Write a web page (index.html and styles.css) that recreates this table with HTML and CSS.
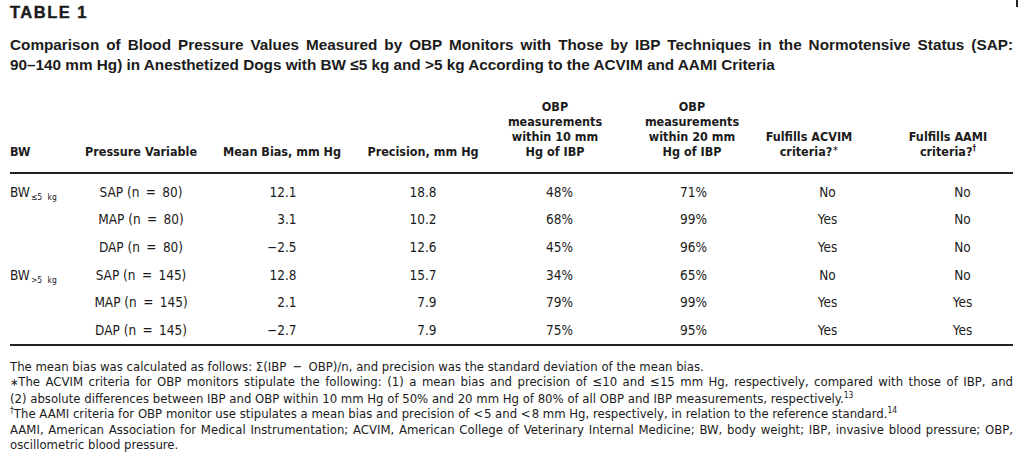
FILE: index.html
```html
<!DOCTYPE html>
<html lang="en">
<head>
<meta charset="utf-8">
<title>Table 1</title>
<link rel="stylesheet" href="styles.css">
</head>
<body>
<div class="page">
  <span class="edge-mark"></span>
  <h1 class="label">TABLE 1</h1>
  <h2 class="caption">
    <span class="jline">Comparison of Blood Pressure Values Measured by OBP Monitors with Those by IBP Techniques in the Normotensive Status (SAP:</span>
    <span class="lline">90–140 mm Hg) in Anesthetized Dogs with BW ≤5 kg and &gt;5 kg According to the ACVIM and AAMI Criteria</span>
  </h2>

  <div class="table">
    <div class="row head">
      <div class="cell c-bw"><span>BW</span></div>
      <div class="cell"><span>Pressure Variable</span></div>
      <div class="cell"><span>Mean Bias, mm Hg</span></div>
      <div class="cell"><span>Precision, mm Hg</span></div>
      <div class="cell"><span>OBP<br>measurements<br>within 10 mm<br>Hg of IBP</span></div>
      <div class="cell"><span>OBP<br>measurements<br>within 20 mm<br>Hg of IBP</span></div>
      <div class="cell"><span>Fulfills ACVIM<br>criteria?<sup class="ast">∗</sup></span></div>
      <div class="cell"><span>Fulfills AAMI<br>criteria?<sup>†</sup></span></div>
    </div>

    <div class="body">
      <div class="row">
        <div class="cell c-bw"><span>BW<sub>≤5 kg</sub></span></div>
        <div class="cell"><span>SAP (n <span class="eq">=</span> 80)</span></div>
        <div class="cell num mb"><span>12.1</span></div>
        <div class="cell num pr"><span>18.8</span></div>
        <div class="cell o10"><span>48%</span></div>
        <div class="cell o20"><span>71%</span></div>
        <div class="cell acv"><span>No</span></div>
        <div class="cell aam"><span>No</span></div>
      </div>
      <div class="row">
        <div class="cell c-bw"></div>
        <div class="cell"><span>MAP (n <span class="eq">=</span> 80)</span></div>
        <div class="cell num mb"><span>3.1</span></div>
        <div class="cell num pr"><span>10.2</span></div>
        <div class="cell o10"><span>68%</span></div>
        <div class="cell o20"><span>99%</span></div>
        <div class="cell acv"><span>Yes</span></div>
        <div class="cell aam"><span>No</span></div>
      </div>
      <div class="row">
        <div class="cell c-bw"></div>
        <div class="cell"><span>DAP (n <span class="eq">=</span> 80)</span></div>
        <div class="cell num mb"><span>−2.5</span></div>
        <div class="cell num pr"><span>12.6</span></div>
        <div class="cell o10"><span>45%</span></div>
        <div class="cell o20"><span>96%</span></div>
        <div class="cell acv"><span>Yes</span></div>
        <div class="cell aam"><span>No</span></div>
      </div>
      <div class="row">
        <div class="cell c-bw"><span>BW<sub>&gt;5 kg</sub></span></div>
        <div class="cell"><span>SAP (n <span class="eq">=</span> 145)</span></div>
        <div class="cell num mb"><span>12.8</span></div>
        <div class="cell num pr"><span>15.7</span></div>
        <div class="cell o10"><span>34%</span></div>
        <div class="cell o20"><span>65%</span></div>
        <div class="cell acv"><span>No</span></div>
        <div class="cell aam"><span>No</span></div>
      </div>
      <div class="row">
        <div class="cell c-bw"></div>
        <div class="cell"><span>MAP (n <span class="eq">=</span> 145)</span></div>
        <div class="cell num mb"><span>2.1</span></div>
        <div class="cell num pr"><span>7.9</span></div>
        <div class="cell o10"><span>79%</span></div>
        <div class="cell o20"><span>99%</span></div>
        <div class="cell acv"><span>Yes</span></div>
        <div class="cell aam"><span>Yes</span></div>
      </div>
      <div class="row">
        <div class="cell c-bw"></div>
        <div class="cell"><span>DAP (n <span class="eq">=</span> 145)</span></div>
        <div class="cell num mb"><span>−2.7</span></div>
        <div class="cell num pr"><span>7.9</span></div>
        <div class="cell o10"><span>75%</span></div>
        <div class="cell o20"><span>95%</span></div>
        <div class="cell acv"><span>Yes</span></div>
        <div class="cell aam"><span>Yes</span></div>
      </div>
    </div>
  </div>

  <div class="notes">
    <p class="lline">The mean bias was calculated as follows: Σ(IBP <span class="eq">−</span> OBP)/n, and precision was the standard deviation of the mean bias.</p>
    <p class="jline"><span class="ast">∗</span>The ACVIM criteria for OBP monitors stipulate the following: (1) a mean bias and precision of ≤10 and ≤15 mm Hg, respectively, compared with those of IBP, and</p>
    <p class="lline">(2) absolute differences between IBP and OBP within 10 mm Hg of 50% and 20 mm Hg of 80% of all OBP and IBP measurements, respectively.<sup>13</sup></p>
    <p class="lline"><sup>†</sup>The AAMI criteria for OBP monitor use stipulates a mean bias and precision of <span class="lt">&lt;</span>5 and <span class="lt">&lt;</span>8 mm Hg, respectively, in relation to the reference standard.<sup>14</sup></p>
    <p class="jline">AAMI, American Association for Medical Instrumentation; ACVIM, American College of Veterinary Internal Medicine; BW, body weight; IBP, invasive blood pressure; OBP,</p>
    <p class="lline">oscillometric blood pressure.</p>
  </div>
</div>
</body>
</html>
```

FILE: styles.css
```css
* { box-sizing: border-box; }

html, body {
  margin: 0;
  padding: 0;
  background: #ffffff;
  color: #1b1b1b;
}

.page {
  position: relative;
  width: 1023px;
  height: 476px;
  padding: 0 10px;
  overflow: hidden;
}

.edge-mark {
  position: absolute;
  left: 1016px;
  top: 0;
  width: 2px;
  height: 7px;
  background: #222;
}

.label {
  margin: 0;
  padding-top: 3px;
  font-family: "Liberation Sans", Arial, sans-serif;
  font-weight: 700;
  font-size: 16.5px;
  line-height: 19px;
  letter-spacing: 1.5px;
  -webkit-text-stroke: 0.4px #1b1b1b;
}

.caption {
  margin: 13px 0 0;
  font-family: "Liberation Sans", Arial, sans-serif;
  font-weight: 700;
  font-size: 15.3px;
  line-height: 20px;
}

.jline {
  display: block;
  text-align: justify;
  text-align-last: justify;
  white-space: nowrap;
}

.lline {
  display: block;
  white-space: nowrap;
}

/* table */
.table {
  margin-top: 24px;
  font-family: "DejaVu Sans Condensed", "Liberation Sans", sans-serif;
}

.row {
  display: grid;
  grid-template-columns: 93px 76px 206px 76px 188px 86px 148px 130px;
}

.cell {
  display: flex;
  justify-content: center;
  white-space: nowrap;
}

.cell.c-bw {
  justify-content: flex-start;
}

.head {
  align-items: end;
  font-weight: 700;
  font-size: 12.5px;
  line-height: 15px;
  padding-bottom: 13px;
  border-bottom: 2px solid #222;
  text-align: center;
}

.head .c-bw span { text-align: left; }

.head sup {
  font-size: 8px;
  line-height: 0;
  vertical-align: 5px;
}

.head sup.ast {
  font-weight: 400;
}

.body {
  padding-top: 4px;
  border-bottom: 2px solid #222;
  padding-bottom: 0;
}

.body .row {
  height: 27.6px;
  align-items: center;
  font-size: 13.5px;
  line-height: 16px;
}

.eq {
  margin: 0 2.5px;
}

.lt {
  margin-right: 1px;
}

.body sub {
  font-size: 8.5px;
  line-height: 0;
  vertical-align: -3px;
  margin-left: 1px;
  word-spacing: 3px;
}

.num span {
  display: inline-block;
  text-align: right;
}

.mb span { width: 30px; margin-left: -1px; }
.pr span { width: 27px; }
.o10 span { margin-left: 9px; }
.o20 span { margin-left: 3px; }
.acv span { margin-left: 37px; }
.aam span { margin-left: 29px; }

/* notes */
.notes {
  margin-top: 13px;
  font-family: "DejaVu Sans Condensed", "Liberation Sans", sans-serif;
  font-size: 13px;
  line-height: 15.5px;
}

.notes p {
  margin: 0;
}

.notes sup {
  font-size: 8.5px;
  line-height: 0;
  vertical-align: 5px;
}

.notes .ast {
  font-size: 11px;
}
```
